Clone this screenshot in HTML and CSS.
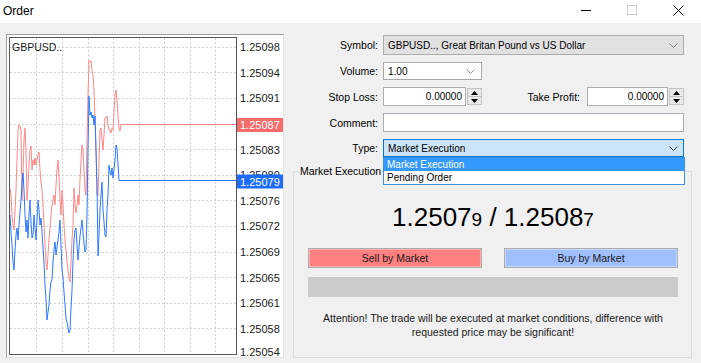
FILE: index.html
```html
<!DOCTYPE html>
<html>
<head>
<meta charset="utf-8">
<title>Order</title>
<link rel="stylesheet" href="styles.css">
</head>
<body>
<div class="window">
  <header class="titlebar">
    <span class="title">Order</span>
    <div class="caption-btns">
      <span class="cbtn"><svg width="10" height="10" viewBox="0 0 10 10"><line x1="0" y1="5.5" x2="10" y2="5.5" stroke="#000" stroke-width="1"/></svg></span>
      <span class="cbtn"><svg width="10" height="10" viewBox="0 0 10 10"><rect x="0.5" y="0.5" width="9" height="9" fill="none" stroke="#cfcfcf" stroke-width="1"/></svg></span>
      <span class="cbtn"><svg width="11" height="11" viewBox="0 0 11 11"><path d="M0.5 0.5 L10.5 10.5 M10.5 0.5 L0.5 10.5" stroke="#000" stroke-width="1" fill="none"/></svg></span>
    </div>
  </header>
  <main class="client">
    <section class="chart-panel">
      <svg class="chart" width="276" height="322" viewBox="7 35 276 322">
        <rect x="7" y="35" width="276" height="322" fill="#fff"/>
        <g stroke="#d2d2d2" stroke-width="1" stroke-dasharray="2 2" fill="none">
          <path d="M10 47.5H236M10 72.5H236M10 98.5H236M10 124.5H236M10 149.5H236M10 175.5H236M10 200.5H236M10 226.5H236M10 252.5H236M10 277.5H236M10 303.5H236M10 328.5H236"/>
          <path d="M36.5 38V354M62.5 38V354M88.5 38V354M113.5 38V354M139.5 38V354M164.5 38V354M190.5 38V354M215.5 38V354"/>
        </g>
        <text class="sym" x="12" y="51">GBPUSD..</text>
        <polyline fill="none" stroke="#ff8787" stroke-width="1" points="10,188 11,195 12,215 13,225 14,230 15,210 16,190 17,160 18,130 19,125 20,126 21,130 22,200 23,175 24,140 25,128 26,150 27,200 28,185 29,165 30,150 31,146 32,170 33,160 34,165 35,158 36,165 37,160 38,155 39,152 40,170 41,182 42,190 43,205 44,225 45,245 46,262 47,270 48,255 49,240 50,228 51,215 52,205 53,200 54,195 55,205 56,185 57,170 58,160 59,175 60,200 61,215 62,190 63,205 64,225 65,240 66,250 67,262 68,270 69,278 70,282 71,262 72,240 73,225 74,188 75,205 76,213 77,205 78,195 79,205 80,180 81,160 82,145 83,150 84,170 85,190 86,195 87,140 88,95 89,60 90,62 91,61 92,70 93,75 94,90 95,118 96,150 97,195 98,196 99,160 100,130 101,128 102,140 103,150 104,135 105,118 106,117 107,116 108,125 109,130 110,130 111,133 112,128 113,130 114,112 115,95 116,90 117,100 118,115 119,128 120,131 121,124.5 236,124.5"/>
        <polyline fill="none" stroke="#2b78ff" stroke-width="1" points="10,215 11,232 12,245 13,262 14,270 15,250 16,235 17,228 18,240 19,225 20,212 21,200 22,185 23,173 24,190 25,215 26,232 27,220 28,238 29,215 30,200 31,222 32,238 33,235 34,215 35,228 36,240 37,220 38,200 39,210 40,225 41,218 42,232 43,248 44,262 45,285 46,300 47,320 48,312 49,305 50,290 51,282 52,280 53,262 54,250 55,242 56,255 57,247 58,240 59,232 60,220 61,245 62,270 63,278 64,292 65,305 66,318 67,322 68,328 69,333 70,330 71,308 72,290 73,262 74,240 75,230 76,228 77,245 78,260 79,248 80,236 81,228 82,220 83,232 84,244 85,252 86,250 87,215 88,150 89,96 90,115 91,112 92,118 93,115 94,125 95,116 96,150 97,185 98,256 99,235 100,210 101,195 102,182 103,210 104,222 105,235 106,237 107,210 108,195 109,165 110,172 111,175 112,168 113,178 114,170 115,160 116,145 117,148 118,165 119,180.5 236,180.5"/>
        <rect x="9.5" y="37.5" width="227" height="317" fill="none" stroke="#555" stroke-width="1"/>
        <g class="axis">
          <text x="240" y="51">1.25098</text>
          <text x="240" y="77">1.25094</text>
          <text x="240" y="102">1.25091</text>
          <text x="240" y="154">1.25083</text>
          <text x="240" y="179">1.25080</text>
          <text x="240" y="205">1.25076</text>
          <text x="240" y="230">1.25072</text>
          <text x="240" y="256">1.25069</text>
          <text x="240" y="282">1.25065</text>
          <text x="240" y="307">1.25061</text>
          <text x="240" y="333">1.25058</text>
          <text x="240" y="356">1.25054</text>
        </g>
        <rect x="237" y="118" width="47" height="14" fill="#f86c6c"/>
        <text class="tag" x="240" y="129">1.25087</text>
        <rect x="237" y="174.5" width="47" height="14" fill="#1c6cff"/>
        <text class="tag" x="240" y="185.5">1.25079</text>
      </svg>
    </section>
    <section class="order-pane">
      <div class="form">
        <span class="lbl">Symbol:</span>
        <div class="select symbol">
          <span>GBPUSD.., Great Britan Pound vs US Dollar</span>
          <svg class="chev" width="9" height="5" viewBox="0 0 9 5"><path d="M0.5 0.5 L4.5 4.5 L8.5 0.5" fill="none" stroke="#808080" stroke-width="1"/></svg>
        </div>
        <span class="lbl">Volume:</span>
        <div class="ctrl-row row-volume">
          <div class="select volume">
            <span>1.00</span>
            <svg class="chev" width="9" height="5" viewBox="0 0 9 5"><path d="M0.5 0.5 L4.5 4.5 L8.5 0.5" fill="none" stroke="#909090" stroke-width="1"/></svg>
          </div>
        </div>
        <span class="lbl">Stop Loss:</span>
        <div class="ctrl-row">
          <div class="spin-field sl">
            <div class="input num">0.00000</div>
            <div class="spinner">
              <span class="spin-btn"><svg width="7" height="4" viewBox="0 0 7 4"><path d="M0 4 L3.5 0 L7 4Z" fill="#000"/></svg></span>
              <span class="spin-btn"><svg width="7" height="4" viewBox="0 0 7 4"><path d="M0 0 L3.5 4 L7 0Z" fill="#000"/></svg></span>
            </div>
          </div>
          <span class="lbl tp-lbl">Take Profit:</span>
          <div class="spin-field tp">
            <div class="input num">0.00000</div>
            <div class="spinner">
              <span class="spin-btn"><svg width="7" height="4" viewBox="0 0 7 4"><path d="M0 4 L3.5 0 L7 4Z" fill="#000"/></svg></span>
              <span class="spin-btn"><svg width="7" height="4" viewBox="0 0 7 4"><path d="M0 0 L3.5 4 L7 0Z" fill="#000"/></svg></span>
            </div>
          </div>
        </div>
        <span class="lbl">Comment:</span>
        <div class="input comment"></div>
        <span class="lbl">Type:</span>
        <div class="type-wrap">
          <div class="select type">
            <span>Market Execution</span>
            <svg class="chev" width="9" height="5" viewBox="0 0 9 5"><path d="M0.5 0.5 L4.5 4.5 L8.5 0.5" fill="none" stroke="#404040" stroke-width="1"/></svg>
          </div>
          <ul class="dropdown">
            <li class="selected">Market Execution</li>
            <li>Pending Order</li>
          </ul>
        </div>
      </div>
      <fieldset class="group">
        <legend>Market Execution</legend>
        <div class="price">1.2507<small>9</small> / 1.2508<small>7</small></div>
        <div class="buttons">
          <button class="btn sell">Sell by Market</button>
          <button class="btn buy">Buy by Market</button>
        </div>
        <div class="progress"></div>
        <p class="attention">Attention! The trade will be executed at market conditions, difference with<br>requested price may be significant!</p>
      </fieldset>
    </section>
  </main>
</div>
</body>
</html>
```

FILE: styles.css
```css
html, body {
  margin: 0;
  padding: 0;
}
body {
  width: 701px;
  height: 363px;
  overflow: hidden;
  background: #f0f0f0;
  font-family: "Liberation Sans", Arial, sans-serif;
  color: #000;
}
.window {
  width: 701px;
  height: 363px;
}
.titlebar {
  height: 23px;
  background: #fff;
  display: flex;
  align-items: center;
  justify-content: space-between;
}
.title {
  font-size: 12px;
  padding-left: 3px;
  padding-bottom: 2px;
}
.caption-btns {
  display: flex;
  height: 23px;
}
.cbtn {
  width: 46px;
  height: 23px;
  display: flex;
  align-items: center;
  justify-content: center;
  padding-bottom: 3px;
  box-sizing: border-box;
}
.client {
  display: flex;
  align-items: flex-start;
  padding: 11px 0 0 6px;
}
.chart-panel {
  width: 278px;
  height: 324px;
  box-sizing: border-box;
  border: 1px solid;
  border-color: #a0a0a0 #e3e3e3 #e3e3e3 #a0a0a0;
  background: #fff;
}
.chart {
  display: block;
}
.chart text {
  font-family: "Liberation Sans", Arial, sans-serif;
  font-size: 11px;
  fill: #1a1a1a;
}
.chart .sym {
  font-size: 10.5px;
}
.chart .tag {
  fill: #fff;
}
.order-pane {
  width: 399px;
  margin-left: 9px;
}
.form {
  display: grid;
  grid-template-columns: 85px 301px;
  column-gap: 5px;
  row-gap: 7px;
  margin-top: 1px;
}
.lbl {
  font-size: 10.5px;
  text-align: right;
  align-self: center;
}
.select {
  box-sizing: border-box;
  border: 1px solid #adadad;
  display: flex;
  align-items: center;
  justify-content: space-between;
  padding: 0 5px 0 4px;
  font-size: 10px;
}
.select .chev {
  display: block;
}
.symbol {
  height: 20px;
  background: #e1e1e1;
}
.ctrl-row {
  display: flex;
  align-items: center;
  height: 19px;
}
.ctrl-row.row-volume {
  height: 18px;
}
.volume {
  width: 99px;
  height: 18px;
  background: #fff;
  border-color: #a8a8a8;
  padding-right: 6px;
}
.input {
  box-sizing: border-box;
  height: 19px;
  background: #fff;
  border: 1px solid #abadb3;
  font-size: 10px;
  display: flex;
  align-items: center;
}
.input.num {
  justify-content: flex-end;
  padding-right: 3px;
}
.spin-field {
  display: flex;
  align-items: center;
  gap: 1px;
}
.spin-field.sl .input {
  width: 83px;
}
.spin-field.tp .input {
  width: 81px;
}
.spinner {
  width: 15px;
  height: 17px;
  box-sizing: border-box;
  border: 1px solid #c4c4c4;
  display: flex;
  flex-direction: column;
  background: #e9e9e9;
}
.spin-btn {
  flex: 1;
  display: flex;
  align-items: center;
  justify-content: center;
}
.spin-btn + .spin-btn {
  border-top: 1px solid #c4c4c4;
}
.spin-btn svg {
  display: block;
}
.tp-lbl {
  flex: 1;
  padding-right: 7px;
}
.comment {
  width: 301px;
}
.type-wrap {
  position: relative;
}
.type {
  height: 18px;
  background: #cce4f7;
  border-color: #0078d7;
}
.dropdown {
  position: absolute;
  left: 0;
  top: 18px;
  width: 302px;
  margin: 0;
  padding: 0;
  list-style: none;
  box-sizing: border-box;
  border: 1px solid #3d8ee0;
  background: #fff;
  font-size: 10px;
  z-index: 2;
}
.dropdown li {
  height: 13px;
  line-height: 13px;
  padding-left: 3px;
}
.dropdown li.selected {
  background: #3399ff;
  color: #fff;
}
.group {
  box-sizing: border-box;
  width: 399px;
  height: 193px;
  margin: 8px 0 0 0;
  padding: 0 13px 0 14px;
  border: 1px solid #dcdcdc;
  min-width: 0;
}
.group legend {
  font-size: 10.5px;
  line-height: 13px;
  padding: 0 1px;
  margin-left: -9px;
}
.price {
  margin-top: 24px;
  font-size: 26px;
  line-height: 30px;
  text-align: center;
  color: #000;
}
.price small {
  font-size: 19px;
}
.buttons {
  display: flex;
  justify-content: space-between;
  margin-top: 13px;
}
.btn {
  width: 174px;
  height: 20px;
  box-sizing: border-box;
  border: 1px solid #adadad;
  padding: 0;
  margin: 0;
  font-family: "Liberation Sans", Arial, sans-serif;
  font-size: 10.5px;
  color: #1a1a1a;
  box-shadow: inset 0 0 0 1px rgba(255,255,255,0.35);
}
.sell {
  background: #ff8080;
}
.buy {
  background: #a0bfff;
}
.progress {
  height: 20px;
  margin-top: 9px;
  background: #cbcbcb;
}
.attention {
  margin: 14px 0 0 0;
  font-size: 10.5px;
  line-height: 14px;
  text-align: center;
  color: #1a1a1a;
}
```
